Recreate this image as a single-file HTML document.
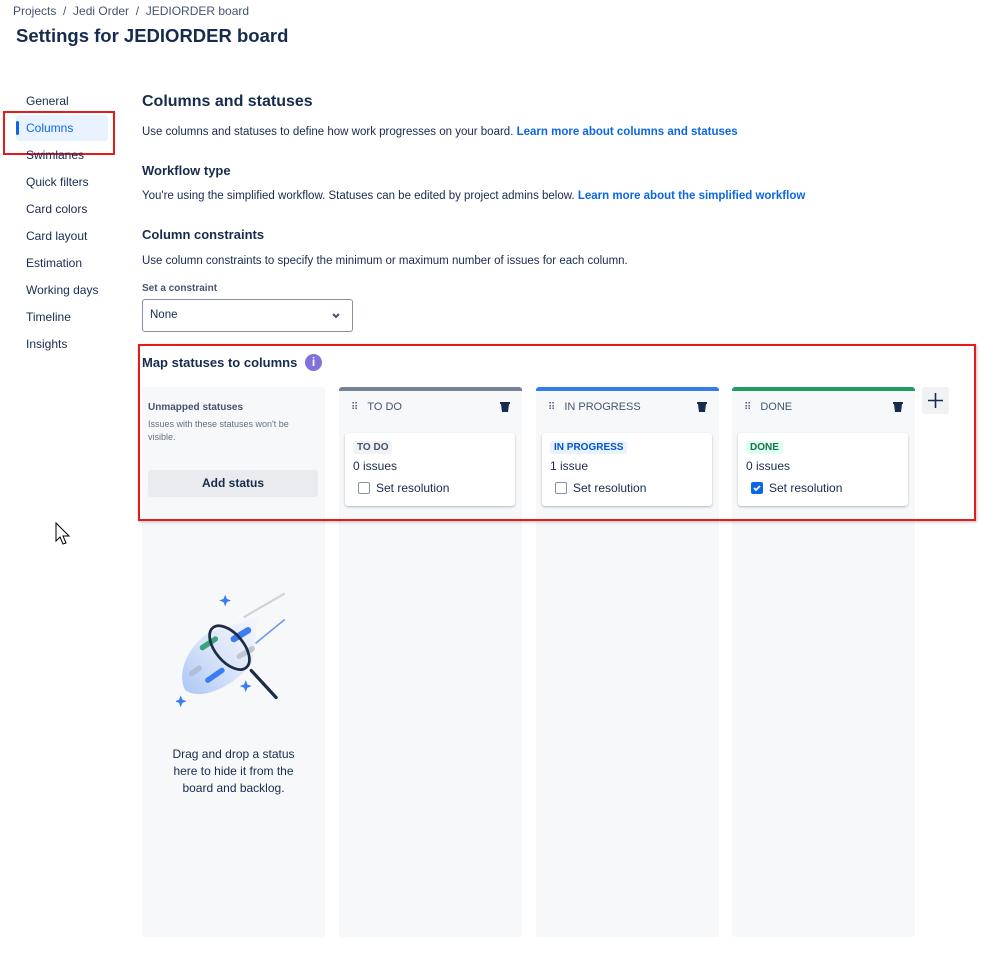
<!DOCTYPE html>
<html><head><meta charset="utf-8"><style>
*{box-sizing:border-box;margin:0;padding:0}
body{width:999px;height:958px;background:#fff;font-family:"Liberation Sans",sans-serif;color:#172b4d;position:relative;overflow:hidden}
.a{position:absolute;white-space:nowrap}
.nav{position:absolute;left:26px;font-size:12px;color:#172b4d}
.t{font-size:11.5px;color:#172b4d}
.lnk{color:#0c66e4;font-weight:bold}
.h{font-weight:bold;color:#172b4d}
.col{position:absolute;top:387px;width:183px;height:550px;background:#f7f8f9;border-radius:3px}
.bar{position:absolute;top:0;left:0;right:0;height:4px;border-radius:3px 3px 0 0}
.ch{position:absolute;top:14px;left:12px;font-size:11px;color:#44546f}
.ch b{font-weight:normal;letter-spacing:1px;margin-right:8px;font-size:10px}
.trash{position:absolute;top:14px;right:12px;width:10px;height:11px}
.card{position:absolute;top:46px;left:6px;width:170px;height:73px;background:#fff;border-radius:3px;box-shadow:0 1px 2px rgba(9,30,66,.3)}
.loz{position:absolute;top:8px;left:8px;font-size:10px;font-weight:bold;padding:1px 4px;border-radius:3px}
.iss{position:absolute;top:26px;left:8px;font-size:12px;color:#172b4d}
.cb{position:absolute;top:49px;left:13px;width:12px;height:12px;border:1.5px solid #8590a2;border-radius:2px}
.sr{position:absolute;top:48px;left:31px;font-size:12px;color:#172b4d}
</style></head><body>
<div class="a" style="left:13px;top:4px;font-size:12px;color:#44546f">Projects &nbsp;/&nbsp; Jedi Order &nbsp;/&nbsp; JEDIORDER board</div>
<div class="a" style="left:16px;top:25px;font-size:18.5px;font-weight:bold;color:#172b4d">Settings for JEDIORDER board</div>

<div style="position:absolute;left:16px;top:115px;width:92px;height:26px;background:#e9f2ff;border-radius:3px"></div>
<div style="position:absolute;left:16px;top:121px;width:3px;height:14px;background:#0c66e4;border-radius:2px"></div>
<div style="position:absolute;left:3px;top:111px;width:112px;height:44px;border:2px solid #e31b1b"></div>
<div class="nav" style="top:94px">General</div>
<div class="nav" style="top:121px;color:#0c66e4">Columns</div>
<div class="nav" style="top:148px">Swimlanes</div>
<div class="nav" style="top:175px">Quick filters</div>
<div class="nav" style="top:202px">Card colors</div>
<div class="nav" style="top:229px">Card layout</div>
<div class="nav" style="top:256px">Estimation</div>
<div class="nav" style="top:283px">Working days</div>
<div class="nav" style="top:310px">Timeline</div>
<div class="nav" style="top:337px">Insights</div>

<div class="a h" style="left:142px;top:93px;font-size:16px">Columns and statuses</div>
<div class="a t" style="left:142px;top:126px">Use columns and statuses to define how work progresses on your board. <span class="lnk">Learn more about columns and statuses</span></div>
<div class="a h" style="left:142px;top:163px;font-size:13px">Workflow type</div>
<div class="a t" style="left:142px;top:190px">You're using the simplified workflow. Statuses can be edited by project admins below. <span class="lnk">Learn more about the simplified workflow</span></div>
<div class="a h" style="left:142px;top:227px;font-size:13px">Column constraints</div>
<div class="a t" style="left:142px;top:255px">Use column constraints to specify the minimum or maximum number of issues for each column.</div>
<div class="a" style="left:142px;top:283px;font-size:10px;font-weight:bold;color:#44546f">Set a constraint</div>
<div style="position:absolute;left:142px;top:299px;width:211px;height:33px;border:1px solid #8590a2;border-radius:3px"></div>
<div class="a t" style="left:150px;top:309px">None</div>
<svg class="a" style="left:331px;top:312px" width="10" height="8"><path d="M2 2l3 3 3-3" stroke="#44546f" stroke-width="2" fill="none"/></svg>

<div style="position:absolute;left:138px;top:344px;width:838px;height:177px;border:2px solid #e31b1b;z-index:5;box-shadow:1px 1px 3px rgba(0,0,0,.25)"></div>
<div class="a h" style="left:142px;top:355px;font-size:13px">Map statuses to columns</div>
<div class="a" style="left:305px;top:354px;width:17px;height:17px;border-radius:50%;background:#8270db;color:#fff;font-size:12px;font-weight:bold;text-align:center;line-height:17px">i</div>

<div class="col" style="left:142px">
 <div class="a" style="left:6px;top:15px;font-size:10px;font-weight:bold;color:#44546f">Unmapped statuses</div>
 <div class="a" style="left:6px;top:31px;font-size:9px;color:#626f86;white-space:normal;width:160px;line-height:13px">Issues with these statuses won't be visible.</div>
 <div class="a" style="left:6px;top:83px;width:170px;height:27px;background:#e9ebee;border-radius:3px;font-size:12px;font-weight:bold;color:#172b4d;text-align:center;line-height:27px">Add status</div>
 <svg class="a" style="left:34px;top:200px" width="120" height="130" viewBox="0 0 110 120">
  <defs><linearGradient id="g" x1="0" y1="1" x2="1" y2="0"><stop offset="0" stop-color="#a9c4f5"/><stop offset="1" stop-color="#e6eefc" stop-opacity=".3"/></linearGradient></defs>
  <path d="M8 95 C0 80 10 55 30 42 L75 28 L70 70 C50 95 20 105 8 95Z" fill="url(#g)"/>
  <path d="M62 28 L100 6" stroke="#d0d4da" stroke-width="2"/>
  <path d="M73 52 L100 30" stroke="#6d9af0" stroke-width="1.5"/>
  <path d="M24 56 L36 48" stroke="#3aa37a" stroke-width="5" stroke-linecap="round"/>
  <path d="M53 48 L66 40" stroke="#3a7cf2" stroke-width="6" stroke-linecap="round"/>
  <path d="M58 64 L70 57" stroke="#c1c7d0" stroke-width="5" stroke-linecap="round"/>
  <path d="M14 80 L21 75" stroke="#b0bdd4" stroke-width="5" stroke-linecap="round"/>
  <path d="M29 86 L42 77" stroke="#3a7cf2" stroke-width="5" stroke-linecap="round"/>
  <ellipse cx="49" cy="56" rx="13" ry="24" transform="rotate(-40 49 56)" fill="none" stroke="#1d2b45" stroke-width="2.5"/>
  <path d="M69 77 L92 102" stroke="#1d2b45" stroke-width="3" stroke-linecap="round"/>
  <path d="M45 7 l1.5 4 4 1.5 -4 1.5 -1.5 4 -1.5 -4 -4 -1.5 4 -1.5z" fill="#3a7cf2"/>
  <path d="M64 86 l1.5 4 4 1.5 -4 1.5 -1.5 4 -1.5 -4 -4 -1.5 4 -1.5z" fill="#3a7cf2"/>
  <path d="M4 100 l1.5 4 4 1.5 -4 1.5 -1.5 4 -1.5 -4 -4 -1.5 4 -1.5z" fill="#3a7cf2"/>
 </svg>
 <div class="a" style="left:0;width:183px;top:359px;font-size:12px;line-height:17px;text-align:center;white-space:normal;color:#172b4d">Drag and drop a status<br>here to hide it from the<br>board and backlog.</div>
</div>

<div class="col" style="left:339px"><div class="bar" style="background:#758195"></div>
 <div class="ch"><b>⠿</b>TO DO</div>
 <svg class="trash" viewBox="0 0 10 11"><path d="M0 1h10v2H0zM1 3h8l-1 8H2z" fill="#172b4d"/></svg>
 <div class="card"><div class="loz" style="background:#f1f2f4;color:#44546f">TO DO</div><div class="iss">0 issues</div><div class="cb"></div><div class="sr">Set resolution</div></div>
</div>
<div class="col" style="left:536px"><div class="bar" style="background:#357de8"></div>
 <div class="ch"><b>⠿</b>IN PROGRESS</div>
 <svg class="trash" viewBox="0 0 10 11"><path d="M0 1h10v2H0zM1 3h8l-1 8H2z" fill="#172b4d"/></svg>
 <div class="card"><div class="loz" style="background:#e9f2ff;color:#0055cc">IN PROGRESS</div><div class="iss">1 issue</div><div class="cb"></div><div class="sr">Set resolution</div></div>
</div>
<div class="col" style="left:732px"><div class="bar" style="background:#1f9d63"></div>
 <div class="ch"><b>⠿</b>DONE</div>
 <svg class="trash" viewBox="0 0 10 11"><path d="M0 1h10v2H0zM1 3h8l-1 8H2z" fill="#172b4d"/></svg>
 <div class="card"><div class="loz" style="background:#dcfff1;color:#216e4e">DONE</div><div class="iss">0 issues</div>
 <svg class="a" style="left:13px;top:49px" width="12" height="12"><rect width="12" height="12" rx="2" fill="#0c66e4"/><path d="M3 6l2 2 4-4" stroke="#fff" stroke-width="1.8" fill="none"/></svg>
 <div class="sr">Set resolution</div></div>
</div>
<div class="a" style="left:922px;top:387px;width:27px;height:27px;background:#f1f2f4;border-radius:3px"></div>
<svg class="a" style="left:927px;top:392px" width="17" height="17"><path d="M8.5 1v15M1 8.5h15" stroke="#172b4d" stroke-width="1.6"/></svg>

<svg class="a" style="left:55px;top:522px" width="18" height="26"><path d="M1 1v18l4-4 3 7 3-1-3-7h6z" fill="#fff" stroke="#000" stroke-width="1"/></svg>
</body></html>
